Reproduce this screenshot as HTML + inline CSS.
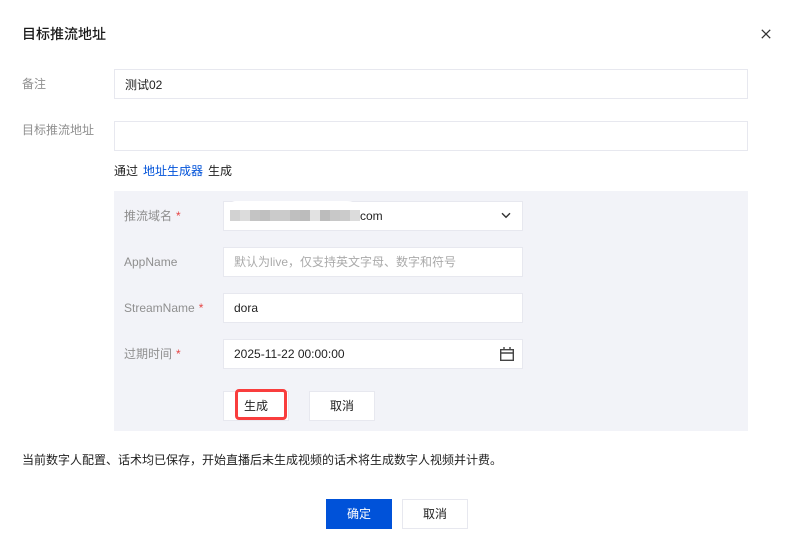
<!DOCTYPE html>
<html lang="zh">
<head>
<meta charset="utf-8">
<title>目标推流地址</title>
<style>
html,body{margin:0;padding:0;background:#fff}
body{width:795px;height:551px;position:relative;overflow:hidden;font-family:"Liberation Sans","Noto Sans CJK SC",sans-serif;font-size:12px;color:#222}
.t{position:absolute;white-space:nowrap;line-height:20px;height:20px}
.l{color:#8f8f8f}
.box{position:absolute;box-sizing:border-box;background:#fff;border:1px solid #e7e8ef}
.btn{position:absolute;box-sizing:border-box;background:#fff;border:1px solid #e7e8ef;height:30px;width:66px;text-align:center;line-height:28px;color:#222}
.req{color:#e54545;margin-left:4px}
.c{position:absolute;top:210px;height:11px;width:10px}
</style>
</head>
<body>
<div class="t" style="left:22px;top:24px;font-size:14px;font-weight:500;color:#1a1a1a">目标推流地址</div>
<svg style="position:absolute;left:760px;top:28px" width="12" height="12" viewBox="0 0 12 12"><path d="M1.8 1.8L10.2 10.2M10.2 1.8L1.8 10.2" stroke="#333" stroke-width="1.3" fill="none"/></svg>

<div class="t l" style="left:22px;top:74px">备注</div>
<div class="box" style="left:114px;top:69px;width:634px;height:30px"></div>
<div class="t" style="left:125px;top:75px">测试02</div>

<div class="t l" style="left:22px;top:120px">目标推流地址</div>
<div class="box" style="left:114px;top:121px;width:634px;height:30px"></div>

<div class="t" style="left:114px;top:161px">通过</div>
<div class="t" style="left:143px;top:161px;color:#0052d9">地址生成器</div>
<div class="t" style="left:208px;top:161px">生成</div>

<div style="position:absolute;left:114px;top:191px;width:634px;height:240px;background:#f2f3f8"></div>

<div class="t l" style="left:124px;top:206px">推流域名<span class="req">*</span></div>
<div class="box" style="left:223px;top:201px;width:300px;height:30px"></div>
<div style="position:absolute;left:228px;top:201px;width:135px;height:29px;background:#fff;border-radius:30px 60px 50px 10px"></div>
<div class="c" style="left:230px;background:#d2d2d2"></div>
<div class="c" style="left:240px;background:#dcdcdc"></div>
<div class="c" style="left:250px;background:#c4c4c4"></div>
<div class="c" style="left:260px;background:#c0c0c0"></div>
<div class="c" style="left:270px;background:#cbcbcb"></div>
<div class="c" style="left:280px;background:#cbcbcb"></div>
<div class="c" style="left:290px;background:#bfbfbf"></div>
<div class="c" style="left:300px;background:#bcbcbc"></div>
<div class="c" style="left:310px;background:#e2e2e2"></div>
<div class="c" style="left:320px;background:#bcbcbc"></div>
<div class="c" style="left:330px;background:#c8c8c8"></div>
<div class="c" style="left:340px;background:#cbcbcb"></div>
<div class="c" style="left:350px;background:#dcdcdc"></div>
<div class="t" style="left:360px;top:206px">com</div>
<svg style="position:absolute;left:500px;top:209px" width="12" height="12" viewBox="0 0 12 12"><path d="M2 4.2L6 8.2L10 4.2" stroke="#333" stroke-width="1.4" fill="none"/></svg>

<div class="t l" style="left:124px;top:252px">AppName</div>
<div class="box" style="left:223px;top:247px;width:300px;height:30px"></div>
<div class="t" style="left:234px;top:252px;color:#aaa">默认为live，仅支持英文字母、数字和符号</div>

<div class="t l" style="left:124px;top:298px">StreamName<span class="req">*</span></div>
<div class="box" style="left:223px;top:293px;width:300px;height:30px"></div>
<div class="t" style="left:234px;top:298px">dora</div>

<div class="t l" style="left:124px;top:344px">过期时间<span class="req">*</span></div>
<div class="box" style="left:223px;top:339px;width:300px;height:30px"></div>
<div class="t" style="left:234px;top:344px">2025-11-22 00:00:00</div>
<svg style="position:absolute;left:500px;top:346px" width="14" height="15" viewBox="0 0 14 15"><path d="M.7 3.7H13.3V14.3H.7ZM.7 7H13.3M4 1V4.2M10 1V4.2" stroke="#444" stroke-width="1.4" fill="none"/></svg>

<div class="btn" style="left:223px;top:391px"></div>
<div class="btn" style="left:309px;top:391px">取消</div>
<div style="position:absolute;box-sizing:border-box;left:235px;top:389px;width:52px;height:31px;border:3.5px solid #f93d3d;border-radius:4px"></div>
<div class="t" style="left:244px;top:396px">生成</div>

<div class="t" style="left:22px;top:450px">当前数字人配置、话术均已保存，开始直播后未生成视频的话术将生成数字人视频并计费。</div>

<div class="btn" style="left:326px;top:499px;background:#0052d9;border-color:#0052d9;color:#fff">确定</div>
<div class="btn" style="left:402px;top:499px">取消</div>
</body>
</html>
